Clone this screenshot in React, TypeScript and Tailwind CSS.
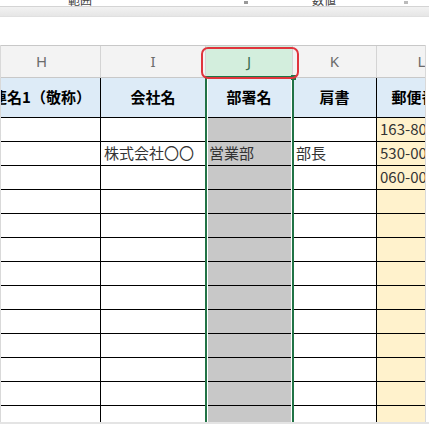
import React from "react";

const JP = { fontFamily: '"Noto Sans CJK JP", "Noto Sans", sans-serif' };
const LAT = { fontFamily: '"Noto Sans", "Liberation Sans", sans-serif' };

const cols = [
  { key: "H", w: "w-[118px]", head: "連名1（敬称）" },
  { key: "I", w: "w-[105px]", head: "会社名" },
  { key: "J", w: "w-[87px]", head: "部署名" },
  { key: "K", w: "w-[84px]", head: "肩書" },
  { key: "L", w: "w-[90px]", head: "郵便番号" },
];

const data: string[][] = [
  ["様", "", "", "", "163-8001"],
  ["", "株式会社〇〇", "営業部", "部長", "530-0001"],
  ["", "", "", "", "060-0001"],
  ...Array.from({ length: 10 }, () => ["", "", "", "", ""]),
];

function cellBg(ci: number) {
  if (ci === 2) return "bg-[#c8c8c8]";
  if (ci === 4) return "bg-[#fff2cc]";
  return "bg-white";
}

export default function App() {
  return (
    <div className="w-[429px] h-[424px] overflow-hidden bg-white flex flex-col" style={JP}>
      {/* top cut-off strip */}
      <div className="h-[6px] overflow-hidden flex items-end text-[12px] leading-[12px] text-[#444] shrink-0">
        <span className="ml-[68px]">範囲</span>
        <span className="ml-[152px] w-[4px] h-[3px] bg-[#999] self-start mt-[1px]"></span>
        <span className="ml-[64px]">数値</span>
        <span className="ml-[68px] w-[4px] h-[3px] bg-[#bbb] self-start mt-[1px]"></span>
      </div>
      <div className="h-[10px] shrink-0 border-t border-[#d4d4d4] bg-gradient-to-b from-[#f2f2f2] to-[#e6e6e6]"></div>
      <div className="h-[29px] shrink-0 bg-white border-t border-[#e0e0e0]"></div>

      <div className="relative flex-1 overflow-hidden w-[426px] border-r border-l border-[#d9d9d9]">
        <div className="flex flex-col -ml-[18px] w-max">
          {/* column letters */}
          <div className="flex h-[33px] border-t border-b border-[#c8c8c8] bg-[#f3f3f3]" style={LAT}>
            {cols.map((c, i) => (
              <div
                key={c.key}
                className={`${c.w} h-full flex items-center justify-center text-[15px] border-r border-[#d4d4d4] ${
                  i === 2 ? "bg-[#d3eedd] text-[#3a6e50]" : "text-[#6b6b6b]"
                }`}
              >
                {c.key}
              </div>
            ))}
          </div>
          {/* header row */}
          <div className="flex h-[40px]">
            {cols.map((c) => (
              <div
                key={c.key}
                className={`${c.w} h-full flex items-center justify-center bg-[#ddebf7] border-r border-b border-black text-[15px] font-bold text-black whitespace-nowrap`}
              >
                {c.head}
              </div>
            ))}
          </div>
          {data.map((row, ri) => (
            <div key={ri} className="flex h-[24px]">
              {cols.map((c, ci) => (
                <div
                  key={c.key}
                  className={`${c.w} h-full flex items-center pl-[3px] border-r border-b border-black text-[15px] text-[#333] whitespace-nowrap overflow-hidden ${cellBg(ci)} ${
                    ci === 0 ? "text-[#5b7fc4]" : ""
                  }`}
                >
                  {row[ci]}
                </div>
              ))}
            </div>
          ))}
        </div>

        {/* selection outline for column J */}
        <div className="absolute left-[204px] top-[31px] w-[89px] bottom-0 border-t-2 border-l-2 border-r-2 border-[#217346] shadow-[inset_1px_0_0_white,inset_-1px_0_0_white] pointer-events-none"></div>
        <div className="absolute left-[290px] top-[30px] w-[5px] h-[5px] bg-[#217346] pointer-events-none"></div>
        {/* red annotation */}
        <div className="absolute left-[200px] top-[2px] w-[98px] h-[32px] border-2 border-[#e0343c] rounded-[7px] pointer-events-none"></div>
      </div>
      <div className="h-[2px] shrink-0 bg-[#e4e4e4]"></div>
    </div>
  );
}
